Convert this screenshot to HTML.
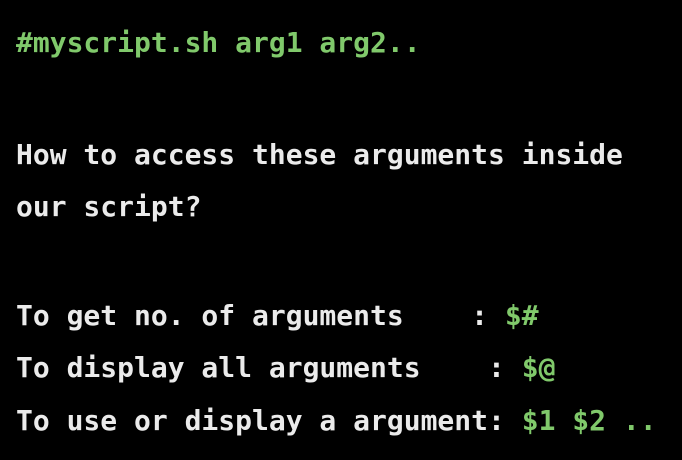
<!DOCTYPE html>
<html><head><style>
html,body{margin:0;padding:0;background:#000;}
body{width:682px;height:460px;position:relative;overflow:hidden;font-family:"DejaVu Sans Mono","Liberation Mono",monospace;font-weight:bold;font-size:28px;color:#ebebeb;}
.l{position:absolute;left:16px;white-space:pre;line-height:32px;}
.g{color:#80c96b;}
</style></head><body>
<div class="l g" style="top:27px">#myscript.sh arg1 arg2..</div>
<div class="l" style="top:139px">How to access these arguments inside</div>
<div class="l" style="top:191px">our script?</div>
<div class="l" style="top:300px">To get no. of arguments    : <span class="g">$#</span></div>
<div class="l" style="top:352px">To display all arguments    : <span class="g">$@</span></div>
<div class="l" style="top:405px">To use or display a argument: <span class="g">$1 $2 ..</span></div>
</body></html>
